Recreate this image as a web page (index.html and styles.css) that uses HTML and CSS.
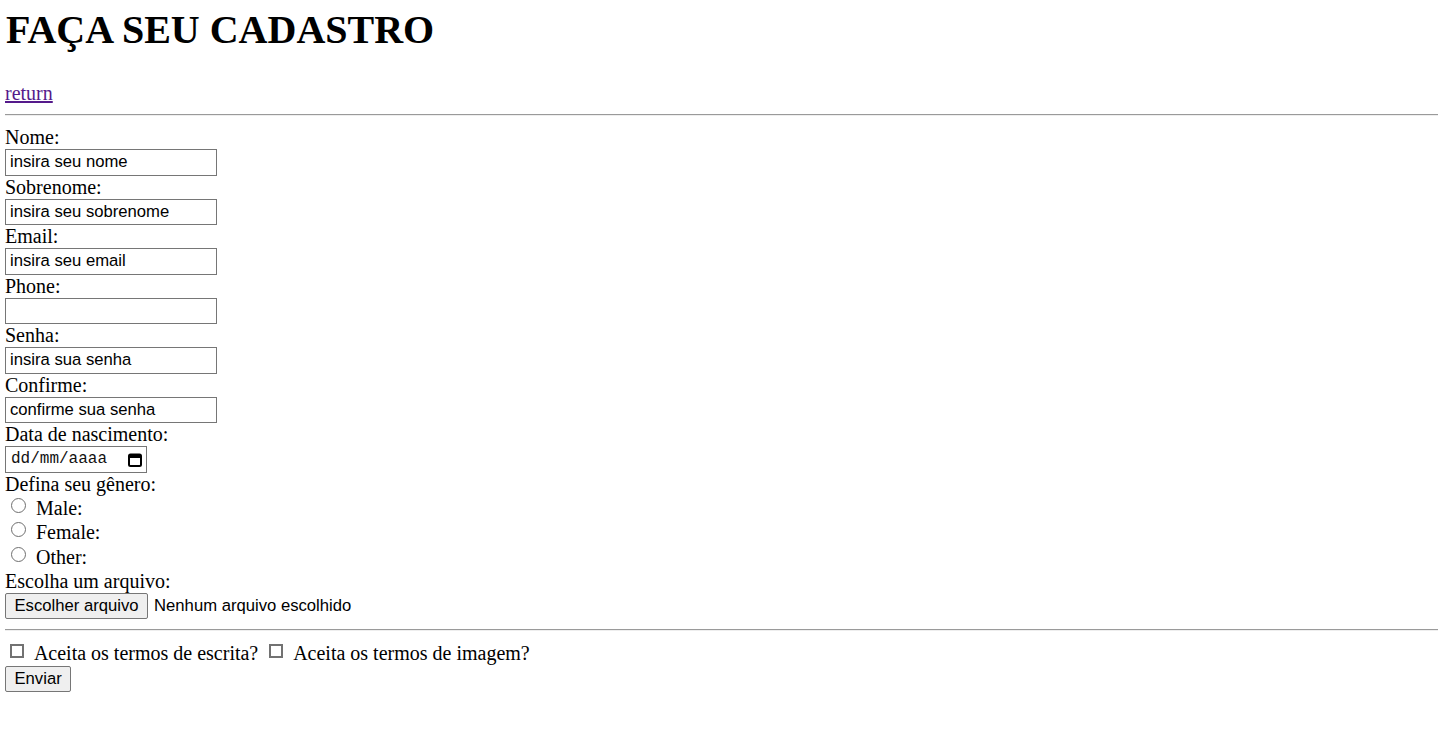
FILE: index.html
```html
<!DOCTYPE html>
<html lang="pt-BR">
<head>
<meta charset="utf-8">
<title>Cadastro</title>
<link rel="stylesheet" href="styles.css">
</head>
<body class="page">
<h1 class="title">FAÇA SEU CADASTRO</h1>
<p class="nav"><a class="nav-link" href="#">return</a></p>
<hr class="divider divider-top">
<form class="signup">
  <label class="field-label">Nome:</label>
  <input class="text-input" type="text" value="insira seu nome">
  <label class="field-label">Sobrenome:</label>
  <input class="text-input" type="text" value="insira seu sobrenome">
  <label class="field-label">Email:</label>
  <input class="text-input" type="text" value="insira seu email">
  <label class="field-label">Phone:</label>
  <input class="text-input" type="text" value="">
  <label class="field-label">Senha:</label>
  <input class="text-input" type="text" value="insira sua senha">
  <label class="field-label">Confirme:</label>
  <input class="text-input" type="text" value="confirme sua senha">
  <label class="field-label">Data de nascimento:</label>
  <div class="date-input">
    <span class="date-text">dd/mm/aaaa</span>
    <svg class="date-icon" width="14" height="15" viewBox="0 0 14 15" aria-hidden="true">
      <rect x="1" y="2.5" width="12" height="11.5" rx="1.5" fill="none" stroke="#000" stroke-width="2"/>
      <rect x="1" y="2.5" width="12" height="3.5" fill="#000"/>
    </svg>
  </div>
  <label class="field-label">Defina seu gênero:</label>
  <label class="radio-row"><span class="radio"></span><span class="radio-text">Male:</span></label>
  <label class="radio-row"><span class="radio"></span><span class="radio-text">Female:</span></label>
  <label class="radio-row"><span class="radio"></span><span class="radio-text">Other:</span></label>
  <label class="field-label">Escolha um arquivo:</label>
  <div class="file-row">
    <button class="btn" type="button">Escolher arquivo</button>
    <span class="file-status">Nenhum arquivo escolhido</span>
  </div>
  <hr class="divider divider-form">
  <div class="terms-row"><span class="check"></span> Aceita os termos de escrita? <span class="check"></span> Aceita os termos de imagem?</div>
  <button class="btn btn-submit" type="button">Enviar</button>
</form>
</body>
</html>
```

FILE: styles.css
```css
html, body {
  margin: 0;
  padding: 0;
  background: #fff;
}

.page {
  padding: 0 0 0 5px;
  font-family: "Liberation Serif", "Times New Roman", serif;
  font-size: 20px;
  color: #000;
}

.title {
  margin: 7px 0 29px 1px;
  font-size: 40px;
  line-height: 46px;
  font-weight: bold;
}

.nav {
  margin: 0;
  line-height: 23px;
}

.nav-link {
  color: #551a8b;
  text-decoration: underline;
}

.divider {
  border: 0;
  border-top: 1px solid #9a9a9a;
  border-bottom: 1px solid #eeeeee;
  height: 0;
}

.divider-top {
  margin: 9px 0 10px 0;
}

.signup {
  display: flex;
  flex-direction: column;
  align-items: flex-start;
  margin: 0;
}

.field-label {
  display: block;
  line-height: 23px;
  height: 23px;
}

.text-input {
  box-sizing: border-box;
  width: 212px;
  height: 26.5px;
  margin: 0;
  padding: 0 4px;
  border: 1px solid #767676;
  border-radius: 0;
  font-family: "Liberation Sans", Arial, sans-serif;
  font-size: 16.67px;
  color: #000;
  background: #fff;
  outline: none;
}

.date-input {
  box-sizing: border-box;
  width: 142px;
  height: 26.5px;
  border: 1px solid #767676;
  display: flex;
  align-items: center;
  justify-content: space-between;
  padding: 0 4px 0 5px;
}

.date-text {
  font-family: "Liberation Mono", "DejaVu Sans Mono", monospace;
  font-size: 16px;
  color: #111;
}

.date-icon {
  display: block;
}

.radio-row {
  display: flex;
  align-items: flex-start;
  height: 24.75px;
  width: 100%;
}

.radio {
  box-sizing: border-box;
  width: 15px;
  height: 15px;
  margin: 2px 0 0 6px;
  border: 1px solid #6f6f6f;
  border-radius: 50%;
  background: #fff;
  flex: none;
}

.radio-text {
  margin-left: 10px;
  line-height: 24.75px;
}

.file-row {
  display: flex;
  align-items: center;
  gap: 6px;
  height: 26px;
}

.btn {
  box-sizing: border-box;
  height: 26px;
  margin: 0;
  padding: 0 8.5px;
  border: 1px solid #767676;
  border-radius: 2px;
  background: #efefef;
  font-family: "Liberation Sans", Arial, sans-serif;
  font-size: 16.67px;
  color: #000;
  line-height: 24px;
}

.file-status {
  font-family: "Liberation Sans", Arial, sans-serif;
  font-size: 16.67px;
}

.divider-form {
  align-self: stretch;
  margin: 10px 0 10px 0;
}

.terms-row {
  line-height: 25px;
  height: 25px;
  white-space: nowrap;
}

.check {
  display: inline-block;
  box-sizing: border-box;
  width: 14px;
  height: 14px;
  margin: 0 6px 2px 5px;
  border: 2px solid #727272;
  background: #fff;
}

.check + .check {
  margin-left: 6px;
}
```
